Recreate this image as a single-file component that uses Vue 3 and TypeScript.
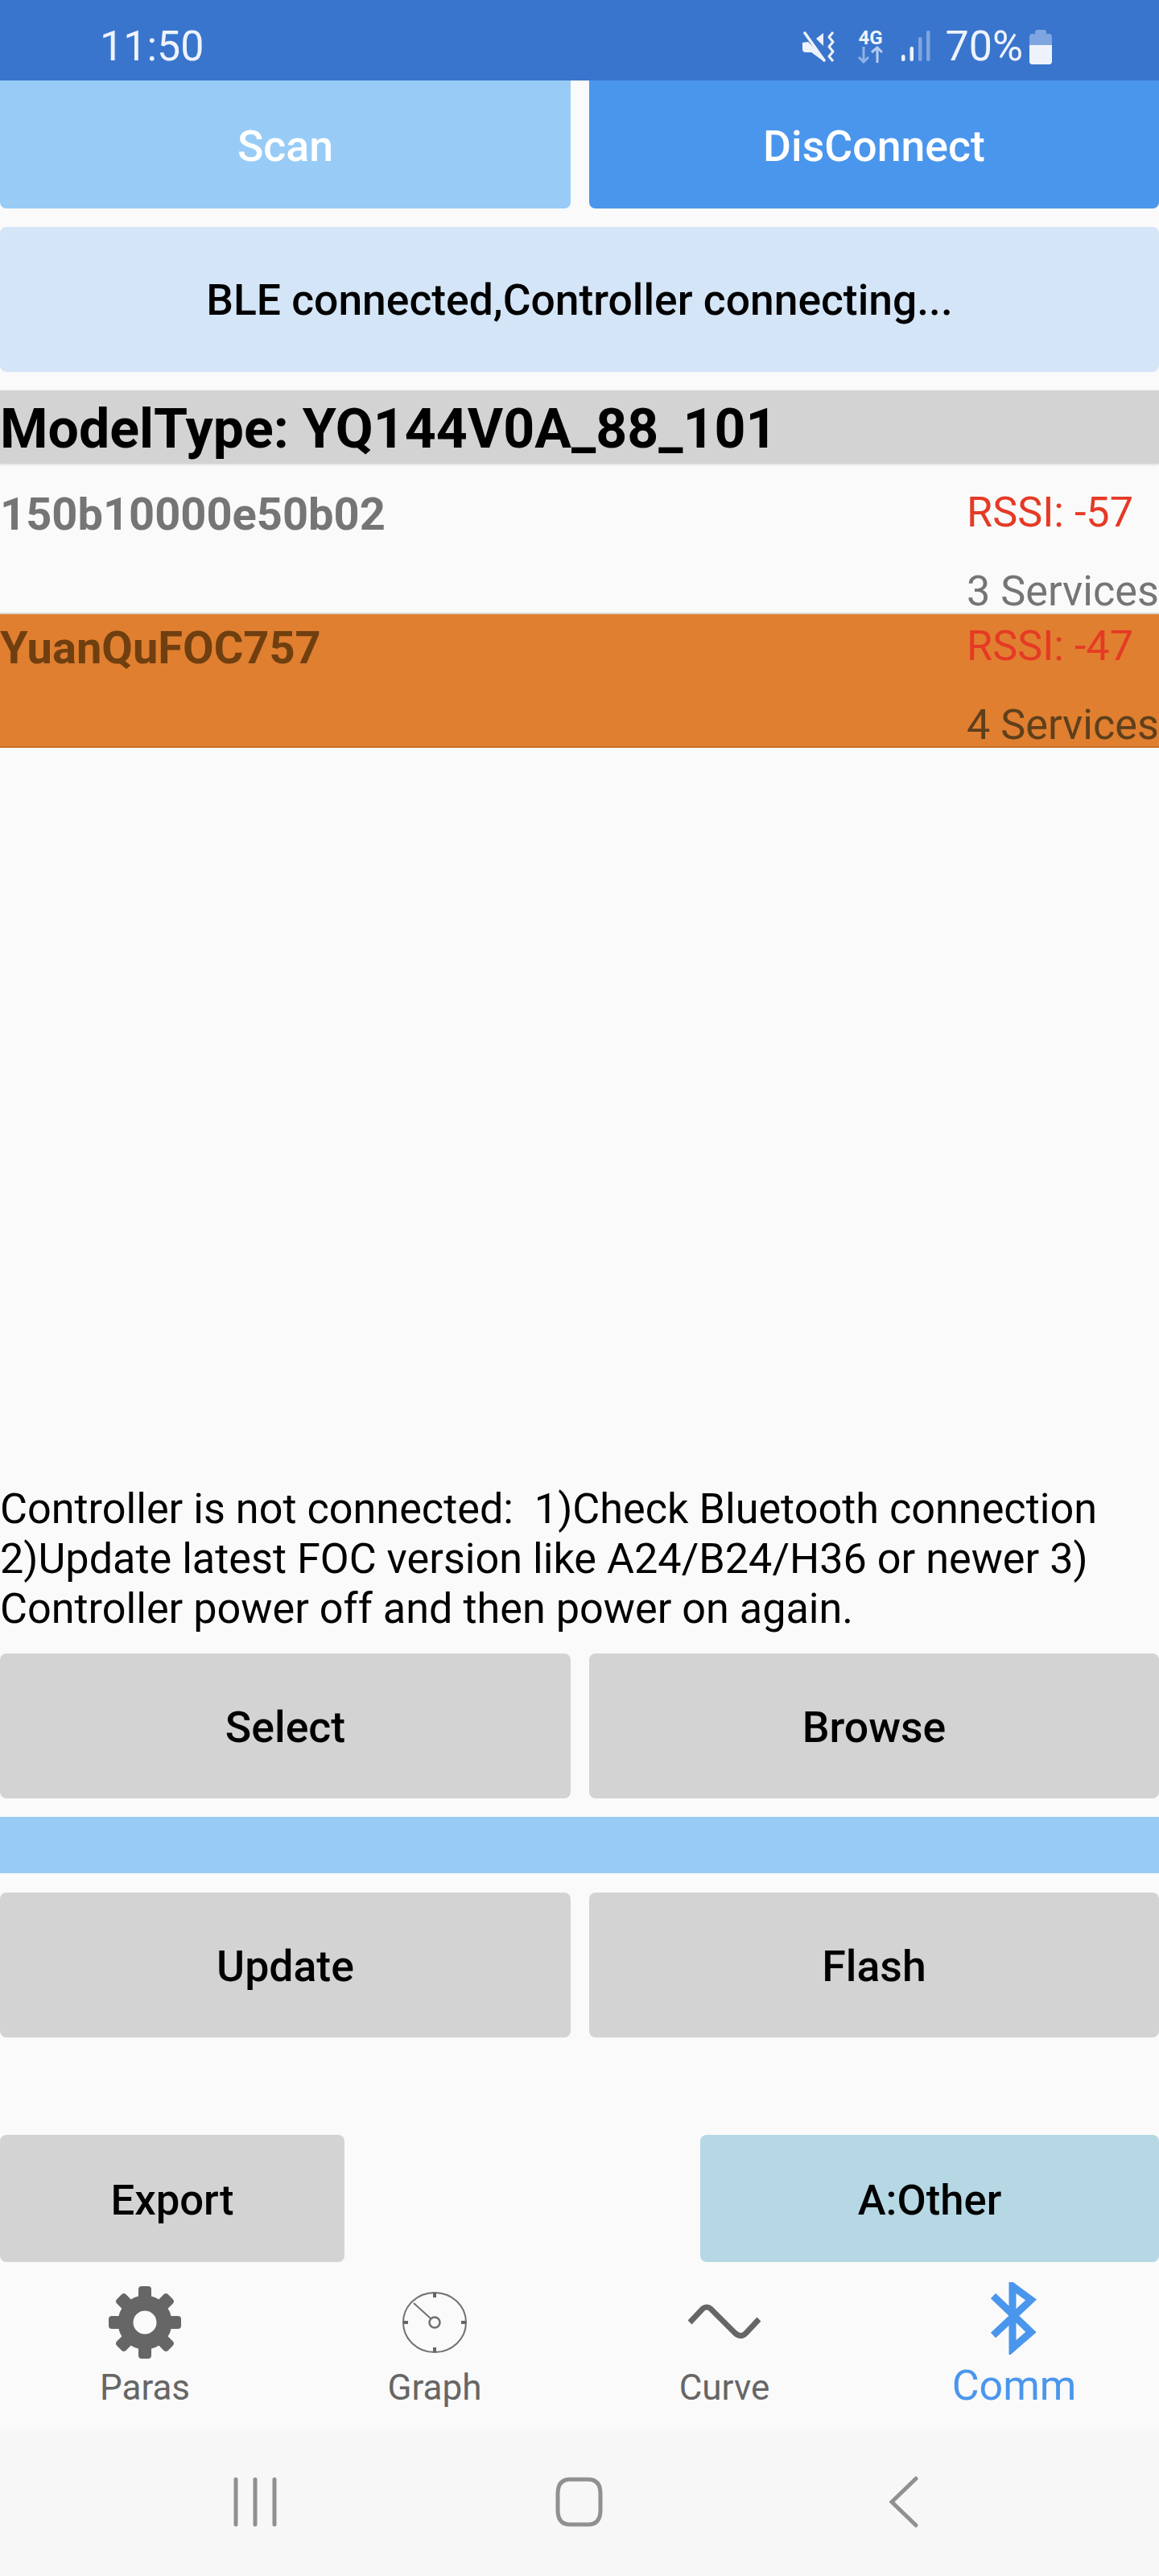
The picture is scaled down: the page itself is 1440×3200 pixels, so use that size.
<template>
  <div class="screen">
    <header class="status-bar">
      <span class="clock">11:50</span>
      <div class="status-icons">
        <svg class="ico-mute" width="42" height="40" viewBox="0 0 42 40">
          <path d="M1 15 L8 14 L27 33 L27 38 L12 27 L5 27 Q1 27 1 23 Z" fill="#eef3fb" />
          <path d="M18 10 L27 3 L27 19 Z" fill="#eef3fb" />
          <path d="M4 3 L28 37" stroke="#eef3fb" stroke-width="3.5" stroke-linecap="round" />
          <path d="M39 2 L34 8 L39 14 L34 20 L39 26 L34 32 L39 38" fill="none" stroke="#eef3fb" stroke-width="3" stroke-linejoin="round" />
        </svg>
        <div class="net">
          <span class="net-label">4G</span>
          <svg width="32" height="22" viewBox="0 0 32 22">
            <path d="M8 1 V20 M2 14 L8 20 L14 14" fill="none" stroke="#8fb1e5" stroke-width="3" />
            <path d="M25 21 V2 M18 8 L25 2 L31 8" fill="none" stroke="#b5ccef" stroke-width="3" />
          </svg>
        </div>
        <svg class="ico-signal" width="36" height="40" viewBox="0 0 36 40">
          <rect x="0" y="30" width="4.5" height="8" rx="2" fill="#eef3fb" />
          <rect x="10.5" y="20" width="4.5" height="18" rx="2" fill="#eef3fb" />
          <rect x="21" y="8" width="4.5" height="30" rx="2" fill="#7fa5e0" />
          <rect x="31" y="0" width="4.5" height="38" rx="2" fill="#7fa5e0" />
        </svg>
        <span class="battery-text">70%</span>
        <div class="battery"><div class="battery-cap"></div><div class="battery-body"><div class="battery-fill"></div></div></div>
      </div>
    </header>

    <main class="content">
      <div class="btn-row">
        <button class="btn btn-scan">Scan</button>
        <button class="btn btn-disconnect">DisConnect</button>
      </div>
      <div class="state-box">BLE connected,Controller connecting...</div>
      <div class="model-bar">ModelType: YQ144V0A_88_101</div>

      <div class="device-list">
        <div
          v-for="device in devices"
          :key="device.name"
          class="device"
          :class="{ selected: device.selected }"
        >
          <span class="device-name">{{ device.name }}</span>
          <div class="device-info">
            <span class="rssi">RSSI: {{ device.rssi }}</span>
            <span class="services">{{ device.services }} Services</span>
          </div>
        </div>
      </div>

      <p class="message">{{ message }}</p>

      <div class="btn-row">
        <button class="btn btn-gray">Select</button>
        <button class="btn btn-gray">Browse</button>
      </div>
      <div class="progress"></div>
      <div class="btn-row">
        <button class="btn btn-gray">Update</button>
        <button class="btn btn-gray">Flash</button>
      </div>
      <div class="bottom-row">
        <button class="btn btn-gray btn-export">Export</button>
        <button class="btn btn-other">A:Other</button>
      </div>
    </main>

    <nav class="tabs">
      <div class="tab">
        <svg class="tab-icon" width="90" height="90" viewBox="0 0 90 90">
          <circle cx="45" cy="45" r="24" fill="none" stroke="#666" stroke-width="19" />
          <rect
            v-for="angle in gearTeeth"
            :key="angle"
            x="37"
            y="0"
            width="16"
            height="18"
            rx="4"
            fill="#666"
            :transform="`rotate(${angle} 45 45)`"
          />
        </svg>
        <span class="tab-label">Paras</span>
      </div>
      <div class="tab">
        <svg class="tab-icon" width="90" height="90" viewBox="0 0 90 90">
          <ellipse cx="45" cy="45" rx="39" ry="37" fill="none" stroke="#707070" stroke-width="2" />
          <circle cx="45" cy="45" r="6.5" fill="none" stroke="#707070" stroke-width="2.5" />
          <path d="M40 40 L19 21" stroke="#707070" stroke-width="2" />
          <path d="M45 8 V14 M45 76 V82 M6 45 H12 M78 45 H84" stroke="#666" stroke-width="4" />
        </svg>
        <span class="tab-label">Graph</span>
      </div>
      <div class="tab">
        <svg class="tab-icon" width="90" height="90" viewBox="0 0 90 90">
          <path d="M2 45 L18 28 Q23 24 28 28 L58 58 Q66 65 72 58 L88 41" fill="none" stroke="#666" stroke-width="7" />
        </svg>
        <span class="tab-label">Curve</span>
      </div>
      <div class="tab active">
        <svg class="tab-icon" width="90" height="90" viewBox="0 0 90 90">
          <path d="M19 17 L66 62 L43 82 V5 L66 22 L19 66" fill="none" stroke="#4a96ec" stroke-width="9" />
        </svg>
        <span class="tab-label">Comm</span>
      </div>
    </nav>

    <footer class="system-nav">
      <svg width="1440" height="64" viewBox="0 0 1440 64">
        <path d="M293 4 V60 M317 4 V60 M341 4 V60" stroke="#909090" stroke-width="5" stroke-linecap="round" />
        <path d="M708 4 H731 Q746 4 746 22 V42 Q746 60 731 60 H708 Q693 60 693 42 V22 Q693 4 708 4 Z" fill="none" stroke="#909090" stroke-width="5" />
        <path d="M1138 3 L1108 32 L1138 61" fill="none" stroke="#909090" stroke-width="5" stroke-linecap="round" />
      </svg>
    </footer>
  </div>
</template>

<script setup lang="ts">
interface Device {
  name: string
  rssi: number
  services: number
  selected: boolean
}

const devices: Device[] = [
  { name: '150b10000e50b02', rssi: -57, services: 3, selected: false },
  { name: 'YuanQuFOC757', rssi: -47, services: 4, selected: true }
]

// two spaces before 1) are in the app's text
const message =
  'Controller is not connected:  1)Check Bluetooth connection 2)Update latest FOC version like A24/B24/H36 or newer 3) Controller power off and then power on again.'

const gearTeeth = [0, 45, 90, 135, 180, 225, 270, 315]
</script>

<style>
html,
body {
  margin: 0;
  background: #fafafa;
}
</style>

<style scoped>
.screen {
  width: 1440px;
  height: 3200px;
  display: flex;
  flex-direction: column;
  overflow: hidden;
  background: #fafafa;
  font-family: Roboto, "Liberation Sans", sans-serif;
}

.status-bar {
  flex: 0 0 100px;
  box-sizing: border-box;
  display: flex;
  justify-content: space-between;
  align-items: center;
  padding: 16px 133px 0 124px;
  background: #3a75cd;
  color: #eef3fb;
  font-size: 52px;
}

.clock {
  line-height: 60px;
}

.status-icons {
  display: flex;
  align-items: center;
}

.ico-mute {
  margin-right: 26px;
}

.net {
  width: 34px;
  display: flex;
  flex-direction: column;
  align-items: center;
  margin-right: 22px;
}

.net-label {
  font-size: 24px;
  font-weight: 700;
  line-height: 20px;
}

.ico-signal {
  margin-right: 18px;
}

.battery-text {
  line-height: 60px;
  margin-right: 8px;
}

.battery {
  width: 28px;
  display: flex;
  flex-direction: column;
  align-items: center;
}

.battery-cap {
  width: 14px;
  height: 5px;
  border-radius: 3px 3px 0 0;
  background: #7fa5e0;
}

.battery-body {
  width: 28px;
  height: 38px;
  border-radius: 4px;
  background: #7fa5e0;
  overflow: hidden;
  display: flex;
  align-items: flex-end;
}

.battery-fill {
  width: 100%;
  height: 24px;
  background: #eef3fb;
}

.content {
  flex: 1;
  display: flex;
  flex-direction: column;
  min-height: 0;
}

.btn-row {
  display: flex;
  justify-content: space-between;
}

.btn {
  height: 180px;
  width: 709px;
  padding: 3px 0 0;
  border: none;
  border-radius: 8px;
  font-family: inherit;
  font-size: 53.6px;
  font-weight: 500;
  color: #000;
}

.btn-row .btn:last-child {
  width: 708px;
}

.btn-scan,
.btn-disconnect {
  height: 159px;
  color: #fff;
  border-radius: 0 0 8px 8px;
}

.btn-scan {
  background: #98ccf6;
}

.btn-disconnect {
  background: #4a96ec;
}

.btn-gray {
  background: #d3d3d3;
}

.state-box {
  height: 180px;
  margin-top: 23px;
  display: flex;
  align-items: center;
  justify-content: center;
  border-radius: 8px;
  background: #d4e5f7;
  font-size: 53.4px;
  font-weight: 500;
  color: #000;
}

.model-bar {
  box-sizing: border-box;
  height: 91px;
  margin-top: 23px;
  padding-top: 5px;
  display: flex;
  align-items: center;
  background: #d3d3d3;
  box-shadow: 0 1px 3px rgba(0, 0, 0, 0.15);
  font-size: 68px;
  font-weight: 700;
  color: #000;
}

.device-list {
  flex: 1;
  padding-top: 21px;
}

.device {
  box-sizing: border-box;
  height: 166px;
  display: flex;
  justify-content: space-between;
  border-bottom: 2px solid #dcd5ce;
  color: #757575;
}

.device.selected {
  background: #e07f30;
  border-bottom-color: #c97029;
  color: #5f3f1c;
}

.device-name {
  font-size: 56px;
  font-weight: 700;
  line-height: 66px;
  margin-top: 9px;
}

.device.selected .device-name {
  color: #6f3f10;
}

.device-info {
  width: 239px;
  display: flex;
  flex-direction: column;
  font-size: 52.2px;
  white-space: nowrap;
}

.rssi {
  color: #e53a25;
  line-height: 60px;
  margin-top: 10px;
}

.services {
  line-height: 60px;
  margin-top: 38px;
}

.message {
  margin: 0 0 24px;
  font-size: 52.2px;
  line-height: 62px;
  color: #000;
  white-space: pre-wrap;
}

.progress {
  height: 70px;
  margin: 23px 0 24px;
  background: #98ccf6;
}

.bottom-row {
  display: flex;
  justify-content: space-between;
  margin-top: 121px;
}

.btn-export,
.btn-other {
  height: 158px;
  font-size: 52.6px;
}

.btn-export {
  width: 428px;
}

.btn-other {
  width: 570px;
  background: #b6d8e4;
}

.tabs {
  flex: 0 0 210px;
  display: grid;
  grid-template-columns: repeat(4, 1fr);
  background: #fafafa;
}

.tab {
  display: flex;
  flex-direction: column;
  align-items: center;
  color: #666;
}

.tab-icon {
  margin-top: 30px;
}

.tab-label {
  font-size: 44px;
  line-height: 52px;
  margin-top: 10px;
}

.tab.active {
  color: #4a96ec;
}

.tab.active .tab-icon {
  margin-top: 25px;
}

.tab.active .tab-label {
  font-size: 52px;
  margin-top: 13px;
}

.system-nav {
  flex: 0 0 180px;
  box-sizing: border-box;
  padding-top: 56px;
  background: #f7f7f7;
}

.system-nav svg {
  display: block;
}
</style>
